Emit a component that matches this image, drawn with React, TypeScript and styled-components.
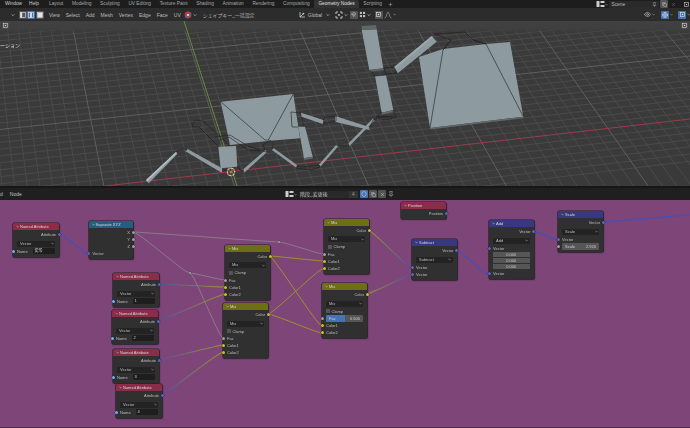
import * as React from "react";
import styled, { createGlobalStyle } from "styled-components";
import { Pin, Copy, X, Plus, Shield, Eye, Globe, Magnet } from "lucide-react";

// styled components
const GlobalStyle = createGlobalStyle`
html, body {
  margin: 0;
  padding: 0;
  background: #1d1d1d;
  overflow: hidden;
}
* {
  box-sizing: border-box;
}
`;

const uiFont = `"Liberation Sans", "Noto Sans CJK JP", sans-serif`;

// the picture is a scaled down capture, so everything sits a little soft
const Screen = styled.main`
  width: 690px;
  height: 428px;
  display: flex;
  flex-direction: column;
  font-family: ${uiFont};
  color: #c4c4c4;
  overflow: hidden;
  filter: blur(0.3px);
`;

const TopBar = styled.header`
  height: 8px;
  flex: none;
  display: flex;
  align-items: center;
  background: #1d1d1d;
  font-size: 4.8px;
  line-height: 8px;
  white-space: nowrap;
`;

const AppMenu = styled.nav`
  width: 44.7px;
  display: flex;
  gap: 7px;
  padding-left: 5px;
  color: #d0d0d0;
`;

const Tab = styled.span<{ $active?: boolean }>`
  padding: 0 4.3px;
  height: 8px;
  border-radius: 2px 2px 0 0;
  background: ${(p) => (p.$active ? "#333333" : "transparent")};
  color: ${(p) => (p.$active ? "#e2e2e2" : "#a8a8a8")};
`;

const ScenePicker = styled.div`
  margin-left: auto;
  display: flex;
  align-items: center;
  height: 8px;
  color: #bbbbbb;
`;

const SceneField = styled.span`
  width: 50px;
  height: 7px;
  margin: 0 1px;
  padding-left: 2.5px;
  padding-right: 2px;
  border-radius: 1px;
  background: #2a2a2a;
  display: flex;
  align-items: center;
  justify-content: space-between;
  line-height: 7px;
`;

const SceneActions = styled.div`
  display: flex;
  align-items: center;
  gap: 1px;
  margin-right: 5px;
`;

const ToolBar = styled.div`
  height: 13px;
  flex: none;
  display: flex;
  align-items: center;
  padding-left: 11px;
  background: #2c2c2c;
  font-size: 5px;
  color: #bdbdbd;
  white-space: nowrap;
`;

const ModeGroup = styled.div`
  display: flex;
  gap: 0.5px;
  margin: 0 5.5px 0 3.5px;
`;

const IconButton = styled.span<{ $on?: boolean }>`
  width: 8px;
  height: 8px;
  flex: none;
  display: flex;
  align-items: center;
  justify-content: center;
  border-radius: 1px;
  background: ${(p) => (p.$on ? "#4772b3" : "#545454")};
  color: #e4e4e4;
`;

const PlainIcon = styled.span`
  display: flex;
  align-items: center;
  justify-content: center;
  width: 8px;
  height: 8px;
  flex: none;
  color: #c4c4c4;
`;

const MenuItems = styled.div`
  display: flex;
  gap: 6px;
`;

const ShapeKeys = styled.span`
  margin-left: 6px;
  width: 95px;
  color: #b4b4b4;
  letter-spacing: -0.1px;
`;

const Tools = styled.div<{ $left?: number; $gap?: number }>`
  display: flex;
  align-items: center;
  gap: ${(p) => p.$gap ?? 1}px;
  margin-left: ${(p) => p.$left ?? 0}px;
`;

const RightTools = styled.div`
  margin-left: auto;
  display: flex;
  gap: 5.5px;
`;

const Viewport = styled.section`
  position: relative;
  height: 165px;
  flex: none;
  background: #3a3a3a;
`;

const SceneDrawing = styled.svg`
  display: block;
  width: 690px;
  height: 165px;
`;

const FloatButton = styled.span<{ $right?: boolean }>`
  position: absolute;
  top: 1px;
  ${(p) => (p.$right ? "right: 2px;" : "left: 2px;")}
  width: 7px;
  height: 7px;
  display: flex;
  align-items: center;
  justify-content: center;
  border-radius: 1px;
  background: #4c4c4c;
  color: #d0d0d0;
  font-size: 5px;
`;

const PanelLabel = styled.span`
  position: absolute;
  left: 0;
  top: 21px;
  font-size: 5px;
  line-height: 7px;
  color: #dddddd;
`;

const Splitter = styled.div`
  height: 2px;
  flex: none;
  background: #161616;
`;

const NodeBar = styled.div`
  height: 12px;
  flex: none;
  display: flex;
  align-items: center;
  background: #1f1f1f;
  font-size: 5px;
  color: #c0c0c0;
  white-space: nowrap;
`;

const NodeMenu = styled.div`
  width: 285px;
  display: flex;
  gap: 7px;
`;

const TreeField = styled.span`
  width: 50px;
  height: 7px;
  margin-left: 2px;
  padding-left: 1px;
  background: #292929;
  line-height: 7px;
  border-radius: 1px 0 0 1px;
  color: #bcbcbc;
`;

const UserCount = styled.span`
  width: 9px;
  height: 7px;
  line-height: 7px;
  text-align: center;
  background: #333333;
  color: #9a9a9a;
`;

const NodeTools = styled.div`
  display: flex;
  gap: 1px;
  margin-left: 2px;
  align-items: center;
`;

const Canvas = styled.section`
  position: relative;
  flex: 1;
  background: #7e4579;
  border-bottom: 1px solid #4c3049;
`;

const Wires = styled.svg`
  position: absolute;
  left: 0;
  top: 0;
  width: 690px;
  height: 228px;
`;

const nodeColors = {
  attr: "#8b2c49",
  conv: "#23607e",
  color: "#6e6e15",
  vec: "#38387f",
};

type NodeKind = keyof typeof nodeColors;

const NodeBox = styled.article<{ $x: number; $y: number; $w: number }>`
  position: absolute;
  left: ${(p) => p.$x}px;
  top: ${(p) => p.$y - 200}px;
  width: ${(p) => p.$w}px;
  display: flex;
  flex-direction: column;
  padding-bottom: 2px;
  border-radius: 1.5px;
  background: #303030;
  box-shadow: 0 0 0 0.6px #222222, 0.5px 1px 1.5px rgba(0, 0, 0, 0.45);
  font-size: 4px;
  line-height: 7px;
  color: #bcbcbc;
`;

const NodeHead = styled.header<{ $kind: NodeKind }>`
  height: 7px;
  margin-bottom: 1px;
  padding-left: 3px;
  display: flex;
  align-items: center;
  gap: 1px;
  border-radius: 1.5px 1.5px 0 0;
  background: ${(p) => nodeColors[p.$kind]};
  color: #d6d6d6;
  white-space: nowrap;
`;

const Row = styled.div<{ $out?: boolean }>`
  position: relative;
  height: 7px;
  flex: none;
  display: flex;
  align-items: center;
  justify-content: ${(p) => (p.$out ? "flex-end" : "flex-start")};
  padding: ${(p) => (p.$out ? "0 3px 0 0" : "0 0 0 4px")};
`;

const Socket = styled.i<{ $out?: boolean; $color: string }>`
  position: absolute;
  top: 2px;
  ${(p) => (p.$out ? "right: -1.5px;" : "left: -1.5px;")}
  width: 3px;
  height: 3px;
  border-radius: 50%;
  background: ${(p) => p.$color};
  box-shadow: 0 0 0 0.3px #1a1a1a;
`;

const SelectBox = styled.div`
  height: 6px;
  margin: 2.5px 4px 1px;
  padding: 0 1.5px 0 3px;
  display: flex;
  align-items: center;
  justify-content: space-between;
  border-radius: 1px;
  background: #232323;
  line-height: 6px;
`;

const ClampRow = styled.div`
  height: 7px;
  flex: none;
  margin-bottom: 0.5px;
  padding-left: 4px;
  display: flex;
  align-items: center;
  gap: 1.5px;
`;

const CheckBox = styled.i`
  width: 4px;
  height: 4px;
  border-radius: 0.5px;
  background: #555555;
`;

const TextField = styled.span`
  margin: 0 4px 0 auto;
  width: 22px;
  height: 5.5px;
  padding-left: 1.5px;
  line-height: 5.5px;
  background: #1e1e1e;
  border-radius: 1px;
  color: #c8c8c8;
`;

const NumberField = styled.div`
  height: 5.5px;
  margin: 0.25px 4px;
  line-height: 5.5px;
  text-align: center;
  background: #565656;
  color: #c8c8c8;
`;

const Slider = styled.div`
  position: relative;
  height: 7px;
  margin: 0 4px;
  display: flex;
  align-items: center;
  justify-content: space-between;
  padding: 0 3px;
  border-radius: 1px;
  background: #565656;
  color: #cfcfcf;
`;

const SliderFill = styled.b`
  position: absolute;
  left: 0;
  top: 0;
  bottom: 0;
  width: 50%;
  background: #4772b3;
  border-radius: 1px 0 0 1px;
`;

const SliderText = styled.span`
  position: relative;
  font-weight: normal;
`;

const SliderSocket = styled(Socket)`
  left: -5.5px;
`;

// small icons
const Chevron = ({ size = 4 }: { size?: number }) => (
  <svg width={size} height={size} viewBox="0 0 8 8" fill="none" stroke="currentColor" strokeWidth="1.4">
    <path d="M1.2 2.6 4 5.4 6.8 2.6" />
  </svg>
);

const ModeIcon = ({ bar }: { bar: "left" | "mid" | "full" }) => (
  <svg width="6" height="6" viewBox="0 0 8 8">
    <rect x="0.5" y="0.5" width="7" height="7" fill="none" stroke="currentColor" strokeWidth="0.8" />
    {bar === "left" && <rect x="0.5" y="0.5" width="2.4" height="7" fill="currentColor" />}
    {bar === "mid" && <rect x="2.8" y="0.5" width="2.4" height="7" fill="currentColor" />}
    {bar === "full" && <rect x="1" y="1" width="6" height="6" fill="currentColor" />}
  </svg>
);

const MatBall = () => (
  <svg width="8" height="8" viewBox="0 0 8 8">
    <circle cx="4" cy="4" r="3.4" fill="#c2383a" />
    <path d="M1 6.2 6.6 1.4 7.4 3 2.4 7.2Z" fill="#3f6fb0" />
    <circle cx="4" cy="4" r="1.1" fill="#e8e8e8" />
  </svg>
);

const Orient = () => (
  <svg width="8" height="8" viewBox="0 0 8 8" fill="none" stroke="#cfcfcf" strokeWidth="0.8">
    <path d="M2 1v5h5" />
    <path d="M2 6 5 3" />
    <circle cx="5.4" cy="2.6" r="0.9" fill="#cfcfcf" stroke="none" />
  </svg>
);

const SnapDots = () => (
  <svg width="7" height="7" viewBox="0 0 8 8" fill="currentColor">
    <rect x="1" y="1" width="2.4" height="2.4" />
    <rect x="4.6" y="1" width="2.4" height="2.4" />
    <rect x="1" y="4.6" width="2.4" height="2.4" />
    <rect x="4.6" y="4.6" width="2.4" height="2.4" />
  </svg>
);

const Falloff = () => (
  <svg width="8" height="8" viewBox="0 0 8 8" fill="none" stroke="#8e8e8e" strokeWidth="0.8">
    <path d="M0.6 7C2.6 7 2.8 1 4 1s1.4 6 3.4 6" />
  </svg>
);

const Pivot = () => (
  <svg width="8" height="8" viewBox="0 0 8 8" fill="none" stroke="#cfcfcf" strokeWidth="0.9">
    <path d="M1 3V1h2M5 1h2v2M7 5v2H5M3 7H1V5" />
    <circle cx="4" cy="4" r="0.9" fill="#cfcfcf" stroke="none" />
  </svg>
);

const EditorIcon = () => (
  <svg width="9" height="8" viewBox="0 0 9 8" fill="#cfcfcf">
    <rect x="0.5" y="1" width="3" height="6" rx="0.5" />
    <rect x="4.5" y="1" width="4" height="2" />
    <rect x="4.5" y="5" width="4" height="2" />
  </svg>
);

const SmallMark = () => (
  <svg width="5" height="5" viewBox="0 0 8 8" fill="currentColor">
    <rect x="1" y="1" width="6" height="6" fill="none" stroke="currentColor" strokeWidth="1" />
    <rect x="3" y="3" width="2" height="2" />
  </svg>
);

// grid of the 3D view, two vanishing points
const farV = { x: -110, y: -900 };
const farU = { x: 8000, y: -721 };
const origin = { x: 230, y: 172 };

const lineToFar = (px: number, py: number, far: { x: number; y: number }, from: number, to: number) =>
  `M${(px + (far.x - px) * from).toFixed(1)} ${(py + (far.y - py) * from).toFixed(1)}L${(px + (far.x - px) * to).toFixed(1)} ${(py + (far.y - py) * to).toFixed(1)}`;

const buildGrid = () => {
  let minor = "";
  let major = "";
  for (let j = -40; j <= 60; j++) {
    const px = origin.x + 12.6 * j;
    const py = origin.y - 0.115 * 12.6 * j;
    const d = lineToFar(px, py, farV, -0.08, 0.3);
    if (j % 10 === 0) major += d;
    else minor += d;
  }
  for (let k = -6; k <= 30; k++) {
    const t = (k * 0.00644) / (1 + k * 0.00644);
    const px = origin.x + (farV.x - origin.x) * t;
    const py = origin.y + (farV.y - origin.y) * t;
    const d = lineToFar(px, py, farU, -0.1, 0.1);
    if (k === 0) continue;
    if (k % 10 === 0) major += d;
    else minor += d;
  }
  return { minor, major };
};

const grid = buildGrid();

const meshFaces = [
  "220.7,101.7 293.3,94 300,138.3 270,140.7 230,145",
  "218.3,146.7 236,146 237.3,166.7 220.7,168.3",
  "146,180 176,152 177.3,154 148.7,183.3",
  "185,151 187.5,149 222.5,168.5 221.7,172.7",
  "243,169.5 265.5,150 266.5,152.5 244.5,172.5",
  "272,150 273.5,148 297,165 296,167.5",
  "298.3,126.7 305,126.7 312.7,156.7 304,158.3",
  "301,112.7 323.3,120 322.7,124 301.7,116.7",
  "335,116 370,127.3 369.3,130 335,121.7",
  "348.3,143.5 373,118.5 374.5,120.5 349.5,146",
  "319,164.5 336.5,144.5 338,146.5 320.5,166.5",
  "361.7,30 376.7,29.3 383.3,68.3 369.3,70",
  "375,76 386,75 393.3,110 381.7,112.7",
  "394,67.3 431.7,36 436.7,41.7 397.7,73.3",
  "419,57 443,49 486,44 510,42 523.3,116.7 430,128",
];

const meshShades = [
  "361.7,26 376,25 376.7,29.3 361.7,30",
  "369.3,70 383.3,68.3 383.6,70 369.8,71.5",
  "381.7,112.7 393.3,110 393.7,112 382,114.5",
  "430,128 523.3,116.7 523.6,118 430.3,129.6",
  "304,158.3 312.7,156.7 313,158.5 304.3,160",
];

const wireLines = [
  "M220.7 101.7 265 140 268.3 140 293.3 94",
  "M430 128 443 50 451 40 434 34 465 32 473 40 486 44 523 116",
  "M443 50 451 40M473 40 486 44",
  "M176 152 181 149 187 149 186 151",
  "M265 150 263 145 270 140 272 142 273 149",
  "M237 166 241 171 244 170",
  "M222 169 228 172",
  "M297 166 304 167 319 165 320 167 311 170 296 168",
  "M336 145 346 146 349 144",
  "M369 129 373 120 380 117 390 116 392 119 382 120",
  "M323 124 336 121 336 116 325 117 323 120",
  "M301 113 291 112 292 127 298 127",
  "M304 127 301 117",
  "M370 70 375 76 386 75 384 68 394 67 397 73 385 74",
  "M382 112 376 117 396 117 393 110",
  "M193 123 195 120 203 121 225 141 229 146",
  "M192 123 193 127 199 127 219 147",
  "M215 137 230 135 248 146 266 152",
  "M219 140 229 137 248 150 260 151",
];

const Scene3D = () => (
  <SceneDrawing viewBox="0 21 690 165">
    <defs>
      <linearGradient id="skyFade" x1="0" y1="0" x2="0" y2="1">
        <stop offset="0" stopColor="#414141" />
        <stop offset="0.65" stopColor="#3f3f3f" />
        <stop offset="1" stopColor="#3c3c3c" stopOpacity="0" />
      </linearGradient>
    </defs>
    <path d={grid.minor} stroke="#4e4e4e" strokeWidth="0.8" fill="none" />
    <path d={grid.major} stroke="#626262" strokeWidth="0.9" fill="none" />
    <rect x="0" y="21" width="690" height="12" fill="url(#skyFade)" />
    <path d="M184 21 237 186" stroke="#6f9435" strokeWidth="0.9" fill="none" />
    <path d="M105 186 690 119" stroke="#9a3c4c" strokeWidth="1" fill="none" />
    {meshFaces.map((p) => (
      <polygon key={p} points={p} fill="#8d9ba0" />
    ))}
    {meshShades.map((p) => (
      <polygon key={p} points={p} fill="#5f6769" />
    ))}
    <polygon points="146,180 176,152 177,153 147,181.5" fill="#b4bfc3" />
    <polygon points="394,67.3 431.7,36 433,37.5 395,69" fill="#9aa7ab" />
    <path d={wireLines.join("")} stroke="#1e1e1e" strokeWidth="0.6" fill="none" />
    <circle cx="231" cy="172" r="3.8" fill="none" stroke="#f0f0f0" strokeWidth="0.9" />
    <circle cx="231" cy="172" r="3.8" fill="none" stroke="#c42a2a" strokeWidth="0.9" strokeDasharray="2 1.98" />
    <circle cx="231" cy="172" r="1.1" fill="#e8851f" />
  </SceneDrawing>
);

// wires
type Wire = { a: [number, number]; b: [number, number]; from: string; to: string; w?: number; flat?: number };

const vecBlue = "#4d4dae";
const yel = "#9e9a22";
const grey = "#8a8088";

const wires: Wire[] = [
  { a: [59, 234], b: [88.5, 254], from: vecBlue, to: vecBlue, w: 1.4 },
  { a: [133, 232], b: [279, 242], from: grey, to: grey, w: 0.9, flat: 6 },
  { a: [279, 242], b: [324, 254], from: grey, to: grey, w: 0.9, flat: 6 },
  { a: [133, 232], b: [190, 273], from: grey, to: grey, w: 0.9, flat: 6 },
  { a: [190, 273], b: [225, 280], from: grey, to: grey, w: 0.9, flat: 4 },
  { a: [190, 273], b: [223, 338], from: grey, to: grey, w: 0.9, flat: 4 },
  { a: [269, 256], b: [324, 261], from: yel, to: yel, w: 0.9 },
  { a: [269, 256], b: [322, 326], from: yel, to: yel, w: 0.9 },
  { a: [268, 314], b: [324, 268], from: yel, to: yel, w: 0.9 },
  { a: [268, 314], b: [322, 333], from: yel, to: yel, w: 0.9 },
  { a: [158, 284], b: [225, 287], from: vecBlue, to: yel, w: 1.1 },
  { a: [157, 321], b: [225, 294], from: vecBlue, to: yel, w: 1.1 },
  { a: [157, 360], b: [223, 345], from: vecBlue, to: yel, w: 1.1 },
  { a: [161, 395], b: [223, 352], from: vecBlue, to: yel, w: 1.1 },
  { a: [368, 230], b: [412, 268], from: yel, to: vecBlue, w: 1.1 },
  { a: [366, 294], b: [412, 275], from: yel, to: vecBlue, w: 1.1 },
  { a: [456, 250], b: [489, 275], from: vecBlue, to: vecBlue, w: 1.4 },
  { a: [533, 231], b: [558, 240], from: vecBlue, to: vecBlue, w: 1.4 },
  { a: [603, 222], b: [690, 215], from: vecBlue, to: vecBlue, w: 1.4 },
];

const WireLayer = () => (
  <Wires viewBox="0 200 690 228">
    <defs>
      {wires.map((c, i) => (
        <linearGradient key={i} id={`w${i}`} gradientUnits="userSpaceOnUse" x1={c.a[0]} y1={c.a[1]} x2={c.b[0]} y2={c.b[1]}>
          <stop offset="0" stopColor={c.from} />
          <stop offset="1" stopColor={c.to} />
        </linearGradient>
      ))}
    </defs>
    {wires.map((c, i) => {
      const f = c.flat ?? 5;
      return (
        <path
          key={i}
          d={`M${c.a[0]} ${c.a[1]}C${c.a[0] + f} ${c.a[1]} ${c.b[0] - f} ${c.b[1]} ${c.b[0]} ${c.b[1]}`}
          stroke={`url(#w${i})`}
          strokeWidth={c.w ?? 1}
          fill="none"
        />
      );
    })}
    <circle cx="279" cy="242" r="1.1" fill="#c8c8c8" stroke="#222" strokeWidth="0.3" />
    <circle cx="190" cy="273" r="1.1" fill="#c8c8c8" stroke="#222" strokeWidth="0.3" />
  </Wires>
);

// nodes
const sock = { vec: "#6363c7", str: "#70b2ff", col: "#c7c729", val: "#a1a1a1" };

type RowSpec =
  | { t: "out" | "in"; label: string; color: string }
  | { t: "select"; label: string }
  | { t: "clamp" }
  | { t: "name"; value: string }
  | { t: "number"; value: string }
  | { t: "fac" | "scale"; label: string; value: string };

type NodeSpec = { title: string; kind: NodeKind; x: number; y: number; w: number; rows: RowSpec[] };

const namedAttr = (x: number, y: number, value: string): NodeSpec => ({
  title: "Named Attribute",
  kind: "attr",
  x,
  y,
  w: 46,
  rows: [
    { t: "out", label: "Attribute", color: sock.vec },
    { t: "select", label: "Vector" },
    { t: "name", value },
  ],
});

const mix = (x: number, y: number, fac: RowSpec): NodeSpec => ({
  title: "Mix",
  kind: "color",
  x,
  y,
  w: 45,
  rows: [
    { t: "out", label: "Color", color: sock.col },
    { t: "select", label: "Mix" },
    { t: "clamp" },
    fac,
    { t: "in", label: "Color1", color: sock.col },
    { t: "in", label: "Color2", color: sock.col },
  ],
});

const facIn: RowSpec = { t: "in", label: "Fac", color: sock.val };

const nodes: NodeSpec[] = [
  namedAttr(13, 223, "変形"),
  {
    title: "Separate XYZ",
    kind: "conv",
    x: 88.5,
    y: 221,
    w: 44.5,
    rows: [
      { t: "out", label: "X", color: sock.val },
      { t: "out", label: "Y", color: sock.val },
      { t: "out", label: "Z", color: sock.val },
      { t: "in", label: "Vector", color: sock.vec },
    ],
  },
  namedAttr(113, 273, "1"),
  namedAttr(112, 310, "2"),
  namedAttr(113, 349, "3"),
  namedAttr(116, 384, "4"),
  mix(225, 244.5, facIn),
  mix(223, 303, facIn),
  mix(324, 218.5, facIn),
  mix(322, 283, { t: "fac", label: "Fac", value: "0.500" }),
  {
    title: "Position",
    kind: "attr",
    x: 401,
    y: 202,
    w: 45,
    rows: [{ t: "out", label: "Position", color: sock.vec }],
  },
  {
    title: "Subtract",
    kind: "vec",
    x: 412,
    y: 239,
    w: 44.5,
    rows: [
      { t: "out", label: "Vector", color: sock.vec },
      { t: "select", label: "Subtract" },
      { t: "in", label: "Vector", color: sock.vec },
      { t: "in", label: "Vector", color: sock.vec },
    ],
  },
  {
    title: "Add",
    kind: "vec",
    x: 489,
    y: 220,
    w: 44.5,
    rows: [
      { t: "out", label: "Vector", color: sock.vec },
      { t: "select", label: "Add" },
      { t: "in", label: "Vector", color: sock.vec },
      { t: "number", value: "0.000" },
      { t: "number", value: "0.000" },
      { t: "number", value: "0.000" },
      { t: "in", label: "Vector", color: sock.vec },
    ],
  },
  {
    title: "Scale",
    kind: "vec",
    x: 558,
    y: 211,
    w: 45,
    rows: [
      { t: "out", label: "Vector", color: sock.vec },
      { t: "select", label: "Scale" },
      { t: "in", label: "Vector", color: sock.vec },
      { t: "scale", label: "Scale", value: "2.920" },
    ],
  },
];

const NodeRow = ({ row }: { row: RowSpec }) => {
  switch (row.t) {
    case "out":
      return (
        <Row $out>
          {row.label}
          <Socket $out $color={row.color} />
        </Row>
      );
    case "in":
      return (
        <Row>
          {row.label}
          <Socket $color={row.color} />
        </Row>
      );
    case "select":
      return (
        <SelectBox>
          {row.label}
          <Chevron size={3} />
        </SelectBox>
      );
    case "clamp":
      return (
        <ClampRow>
          <CheckBox />
          Clamp
        </ClampRow>
      );
    case "name":
      return (
        <Row>
          Name
          <TextField>{row.value}</TextField>
          <Socket $color={sock.str} />
        </Row>
      );
    case "number":
      return <NumberField>{row.value}</NumberField>;
    default:
      return (
        <Slider>
          {row.t === "fac" && <SliderFill />}
          <SliderText>{row.label}</SliderText>
          <SliderText>{row.value}</SliderText>
          <SliderSocket $color={sock.val} />
        </Slider>
      );
  }
};

const GraphNode = ({ spec }: { spec: NodeSpec }) => (
  <NodeBox $x={spec.x} $y={spec.y} $w={spec.w}>
    <NodeHead $kind={spec.kind}>
      <Chevron size={3} />
      {spec.title}
    </NodeHead>
    {spec.rows.map((r, i) => (
      <NodeRow key={i} row={r} />
    ))}
  </NodeBox>
);

const tabs = [
  "Layout",
  "Modeling",
  "Sculpting",
  "UV Editing",
  "Texture Paint",
  "Shading",
  "Animation",
  "Rendering",
  "Compositing",
  "Geometry Nodes",
  "Scripting",
];

const editMenu = ["View", "Select", "Add", "Mesh", "Vertex", "Edge", "Face", "UV"];

// components
const App = () => {
  return (
    <React.Fragment>
      <GlobalStyle />
      <Screen>
        <TopBar>
          <AppMenu>
            <span>Window</span>
            <span>Help</span>
          </AppMenu>
          {tabs.map((t) => (
            <Tab key={t} $active={t === "Geometry Nodes"}>
              {t}
            </Tab>
          ))}
          <PlainIcon>
            <Plus size={5} />
          </PlainIcon>
          <ScenePicker>
            <EditorIcon />
            <Chevron size={3} />
            <SceneField>
              Scene
              <Pin size={5} />
            </SceneField>
            <SceneActions>
              <IconButton>
                <Copy size={5} />
              </IconButton>
              <PlainIcon>
                <X size={5} color="#7d7d7d" />
              </PlainIcon>
            </SceneActions>
            <PlainIcon>
              <SmallMark />
            </PlainIcon>
          </ScenePicker>
        </TopBar>
        <ToolBar>
          <Chevron />
          <ModeGroup>
            <IconButton>
              <ModeIcon bar="left" />
            </IconButton>
            <IconButton $on>
              <ModeIcon bar="mid" />
            </IconButton>
            <IconButton>
              <ModeIcon bar="full" />
            </IconButton>
          </ModeGroup>
          <MenuItems>
            {editMenu.map((m) => (
              <span key={m}>{m}</span>
            ))}
          </MenuItems>
          <Tools $left={3}>
            <MatBall />
            <Chevron />
          </Tools>
          <ShapeKeys>シェイプキー_一括設定</ShapeKeys>
          <Orient />
          <Tools $left={2} $gap={4}>
            <span>Global</span>
            <Chevron />
          </Tools>
          <Tools $left={5}>
            <Pivot />
            <Chevron />
          </Tools>
          <Tools $left={1.5}>
            <IconButton>
              <Magnet size={5} />
            </IconButton>
            <SnapDots />
            <Chevron />
          </Tools>
          <Tools $left={4}>
            <IconButton>
              <SmallMark />
            </IconButton>
            <Falloff />
            <Chevron size={3} />
          </Tools>
          <RightTools>
            <Tools>
              <PlainIcon>
                <Eye size={7} />
              </PlainIcon>
              <Chevron size={3} />
            </Tools>
            <Tools>
              <IconButton $on>
                <Globe size={6} />
              </IconButton>
              <Chevron size={3} />
            </Tools>
            <Tools>
              <IconButton $on>
                <SmallMark />
              </IconButton>
              <Chevron size={3} />
            </Tools>
          </RightTools>
        </ToolBar>
        <Viewport>
          <Scene3D />
          <FloatButton>
            <SmallMark />
          </FloatButton>
          <FloatButton $right>
            <SmallMark />
          </FloatButton>
          <PanelLabel>ーション</PanelLabel>
        </Viewport>
        <Splitter />
        <NodeBar>
          <NodeMenu>
            <span>d</span>
            <span>Node</span>
          </NodeMenu>
          <EditorIcon />
          <Chevron size={3} />
          <TreeField>階段_変更後</TreeField>
          <UserCount>4</UserCount>
          <NodeTools>
            <IconButton $on>
              <Shield size={6} />
            </IconButton>
            <IconButton>
              <Copy size={5} />
            </IconButton>
            <IconButton>
              <X size={5} />
            </IconButton>
            <PlainIcon>
              <Pin size={6} />
            </PlainIcon>
          </NodeTools>
        </NodeBar>
        <Canvas>
          <WireLayer />
          {nodes.map((n) => (
            <GraphNode key={`${n.title}${n.x}`} spec={n} />
          ))}
        </Canvas>
      </Screen>
    </React.Fragment>
  );
};

export default App;
